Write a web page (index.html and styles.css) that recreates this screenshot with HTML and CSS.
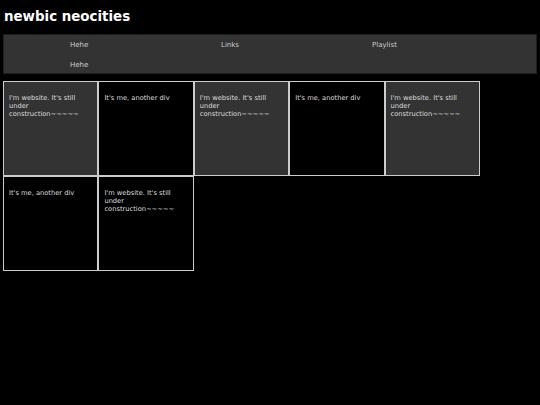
FILE: index.html
```html
<!DOCTYPE html>
<html>
<head>
<meta charset="utf-8">
<link rel="stylesheet" href="styles.css">
</head>
<body>
<h1 class="title">newbic neocities</h1>
<nav class="nav">
  <a class="nav-item">Hehe</a>
  <a class="nav-item">Links</a>
  <a class="nav-item">Playlist</a>
  <a class="nav-item">Hehe</a>
</nav>
<div class="grid">
  <div class="box gray">I'm website. It's still under construction~~~~~</div>
  <div class="box">It's me, another div</div>
  <div class="box gray">I'm website. It's still under construction~~~~~</div>
  <div class="box">It's me, another div</div>
  <div class="box gray">I'm website. It's still under construction~~~~~</div>
  <div class="box">It's me, another div</div>
  <div class="box">I'm website. It's still under construction~~~~~</div>
</div>
</body>
</html>
```
FILE: styles.css
```css
html, body {
  background: #000;
}
body {
  margin: 0;
  padding: 0 3px;
  font-family: "DejaVu Sans", Verdana, sans-serif;
  color: #fff;
}
.title {
  margin: 0;
  padding-top: 9px;
  padding-left: 1px;
  height: 34px;
  box-sizing: border-box;
  font-size: 13.4px;
  line-height: 16px;
  font-weight: bold;
}
.nav {
  display: flex;
  flex-wrap: wrap;
  align-content: flex-start;
  background: #333;
  border: 1px solid #1e1e1e;
  height: 40px;
  box-sizing: border-box;
  padding: 0 0 0 66px;
  margin-bottom: 7px;
}
.nav-item {
  width: 151px;
  height: 20px;
  line-height: 20px;
  font-size: 7px;
  color: #ccc;
}
.grid {
  display: flex;
  flex-wrap: wrap;
}
.box {
  box-sizing: border-box;
  width: 95.4px;
  height: 95px;
  border: 1px solid #ccc;
  padding: 12px 5px 0 5px;
  font-size: 6.7px;
  line-height: 8px;
  color: #ddd;
  background: #000;
}
.box.gray {
  background: #333;
}
```
